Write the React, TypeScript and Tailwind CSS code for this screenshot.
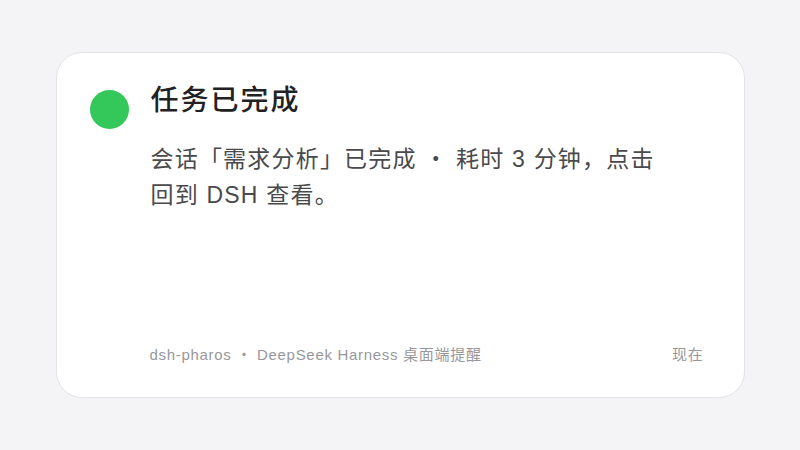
export default function App() {
  return (
    <div
      className="w-[800px] h-[450px] bg-[#f4f4f6] flex items-center justify-center"
      style={{ fontFamily: '"Liberation Sans", "Noto Sans CJK SC", sans-serif' }}
    >
      <div className="w-[689px] h-[346px] bg-white rounded-[26px] border border-[#e3e3e8] flex flex-col pl-[33px] pr-[40px] pt-[37px] pb-[32px]">
        <div className="flex gap-[22px]">
          <div className="w-[39px] h-[39px] rounded-full bg-[#34c759] shrink-0" />
          <div className="flex flex-col">
            <h1 className="text-[28px] leading-[32px] tracking-[2px] font-medium text-[#222224] mt-[-5px]">
              任务已完成
            </h1>
            <p className="mt-[24px] max-w-[520px] text-[23px] leading-[36px] tracking-[1.2px] text-[#4a4a4c]">
              会话「需求分析」已完成 ・ 耗时 3 分钟，点击回到 DSH 查看。
            </p>
          </div>
        </div>
        <div className="mt-auto flex items-center justify-between pl-[60px] text-[15px] leading-[20px] tracking-[0.7px] text-[#98989c]">
          <span>dsh-pharos ・ DeepSeek Harness 桌面端提醒</span>
          <span>现在</span>
        </div>
      </div>
    </div>
  );
}
